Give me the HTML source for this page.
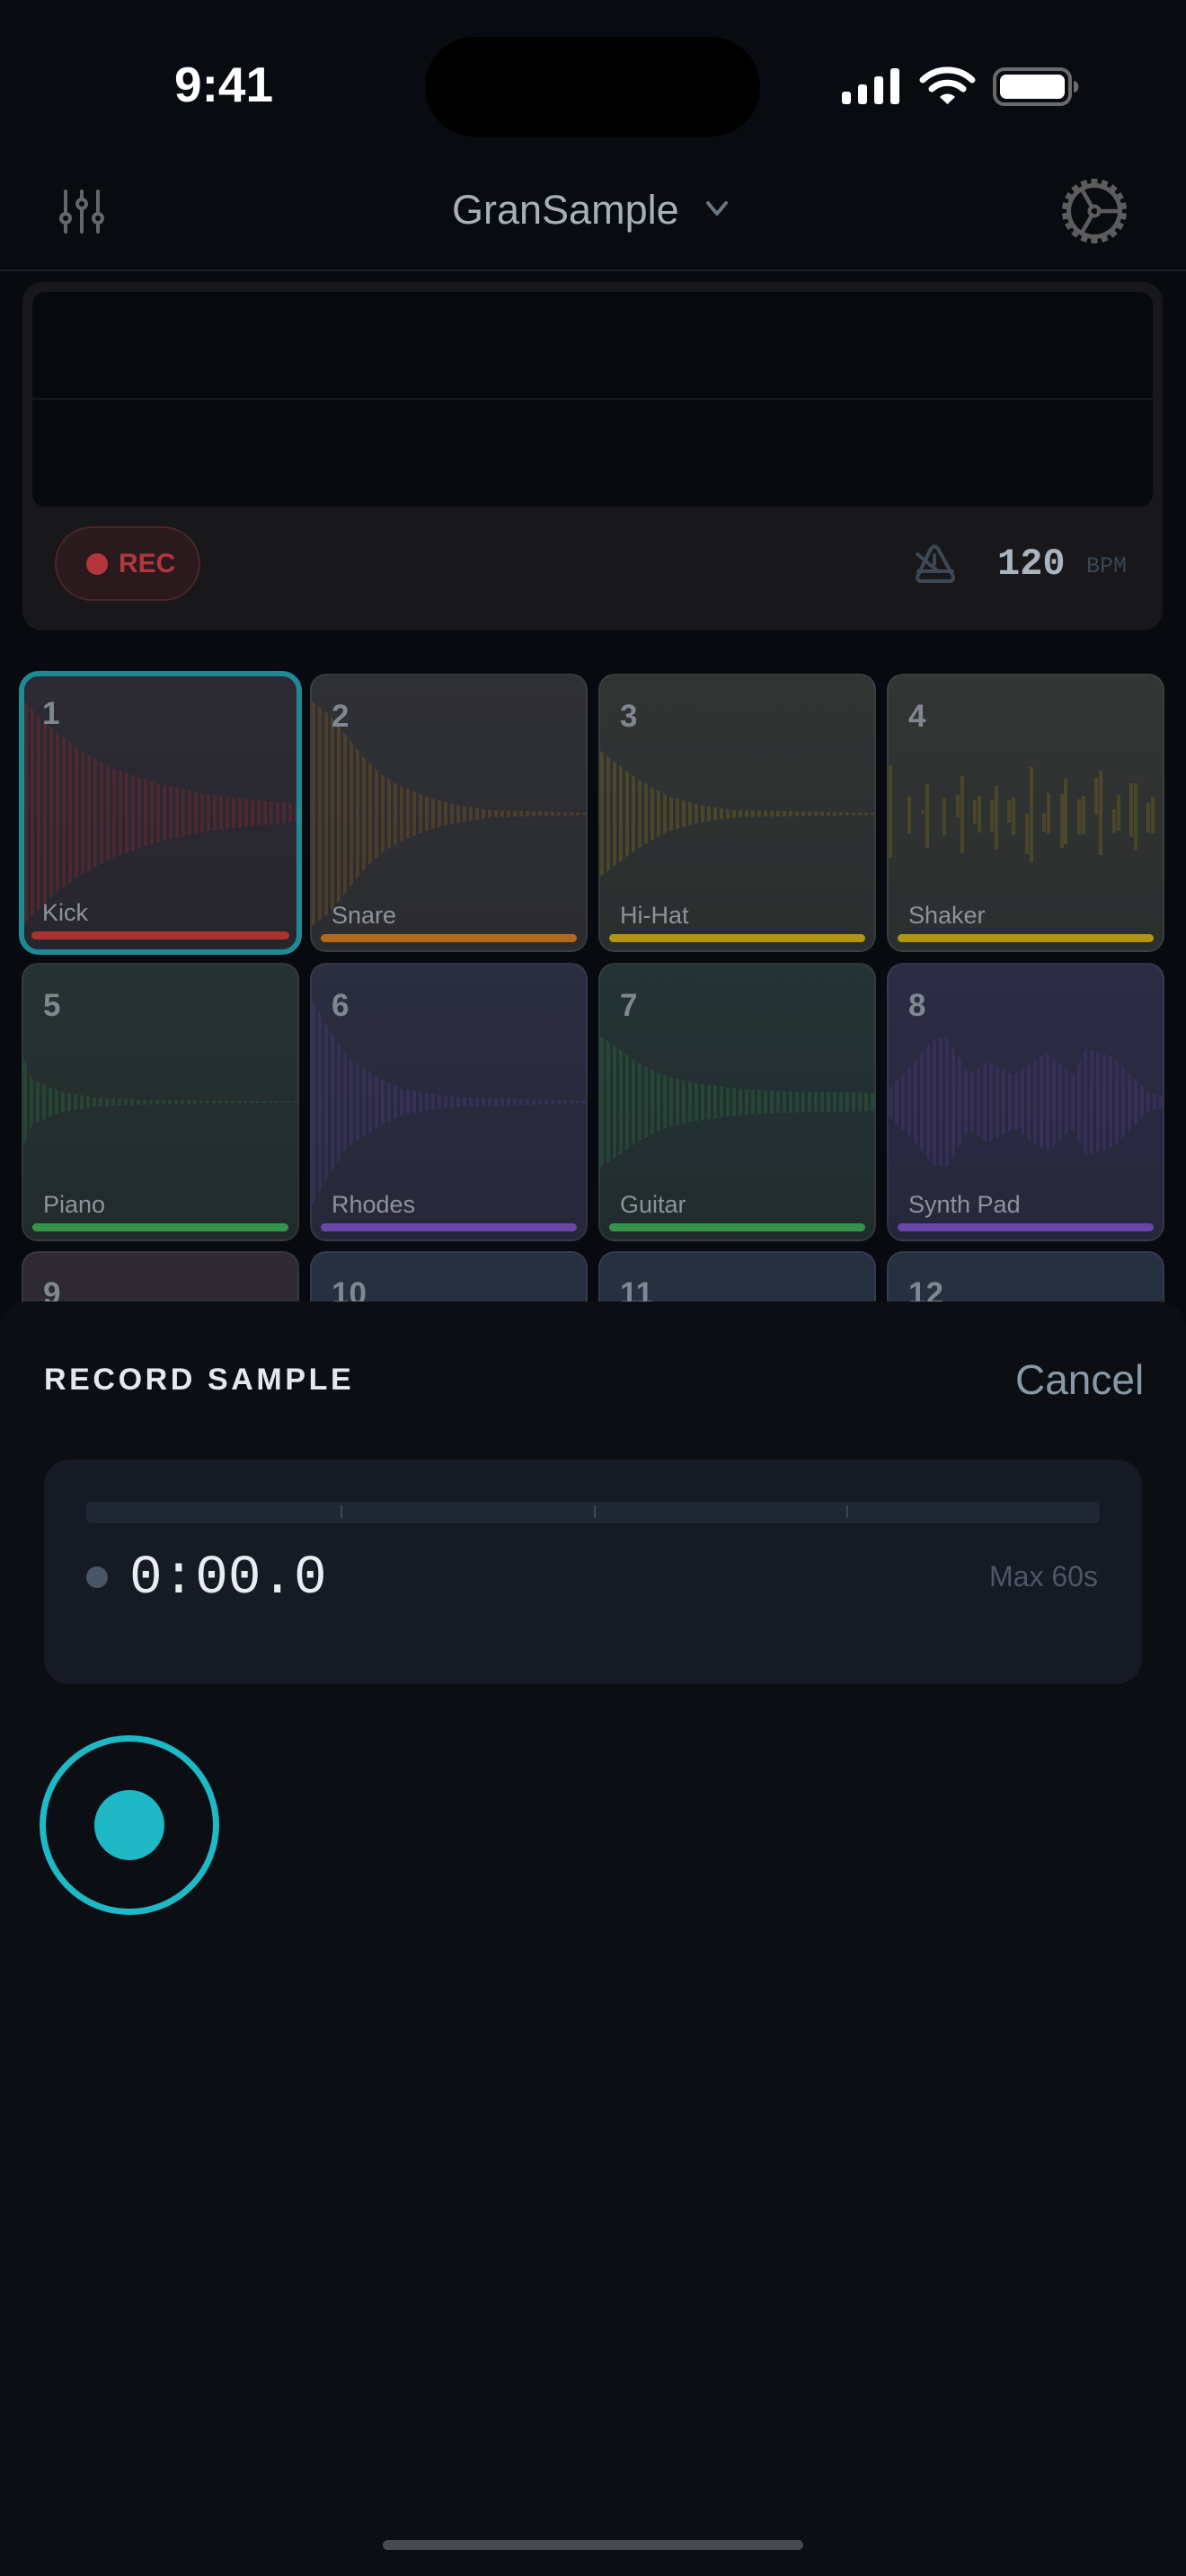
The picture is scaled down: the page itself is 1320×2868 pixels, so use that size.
<!DOCTYPE html>
<html><head><meta charset="utf-8">
<style>
*{margin:0;padding:0;box-sizing:border-box}
html,body{width:1320px;height:2868px;background:#070a0e;overflow:hidden;font-family:"Liberation Sans",sans-serif}
.abs{position:absolute}
.pad{position:absolute;width:309px;height:310px;border-radius:18px;border:2px solid rgba(255,255,255,0.06);overflow:hidden}
.pad svg{position:absolute;left:0;top:0}
.num{position:absolute;left:22px;top:26px;font-size:35px;font-weight:bold;color:#7f8790}
.lbl{position:absolute;left:22px;top:252px;font-size:27px;color:#8c939b}
.bar{position:absolute;left:10px;right:10px;top:288px;height:9px;border-radius:5px}
</style></head><body>
<div class="abs" style="left:0;top:0;width:1320px;height:300px;background:#080b10"></div>
<div class="abs" style="left:194px;top:62px;font-size:55px;font-weight:bold;color:#fff">9:41</div>
<div class="abs" style="left:473px;top:41px;width:373px;height:111px;border-radius:56px;background:#000"></div>
<svg class="abs" style="left:930px;top:70px" width="280" height="54" viewBox="930 70 280 54">
 <rect x="937" y="102" width="10" height="14" rx="3" fill="#fff"/>
 <rect x="955" y="94" width="10" height="22" rx="3" fill="#fff"/>
 <rect x="973" y="85" width="10" height="31" rx="3" fill="#fff"/>
 <rect x="991" y="76" width="10" height="40" rx="3" fill="#fff"/>
 <path d="M1027 89 A40 40 0 0 1 1082 89" stroke="#fff" stroke-width="7" fill="none" stroke-linecap="round"/>
 <path d="M1037 99 A26 26 0 0 1 1072 99" stroke="#fff" stroke-width="7" fill="none" stroke-linecap="round"/>
 <path d="M1046 108 L1054.5 116 L1063 108 A12 12 0 0 0 1046 108Z" fill="#fff"/>
 <rect x="1107" y="77" width="84" height="39" rx="11" fill="none" stroke="#6a6a6a" stroke-width="4"/>
 <rect x="1113" y="83" width="72" height="27" rx="7" fill="#fff"/>
 <path d="M1195 90 a5 6 0 0 1 0 13z" fill="#6a6a6a"/>
</svg>
<svg class="abs" style="left:60px;top:205px" width="64" height="60" viewBox="60 205 64 60">
 <g stroke="#666" stroke-width="4" stroke-linecap="round" fill="none">
 <line x1="73" y1="213" x2="73" y2="238"/><line x1="73" y1="248" x2="73" y2="258"/>
 <line x1="91" y1="213" x2="91" y2="222"/><line x1="91" y1="232" x2="91" y2="258"/>
 <line x1="109" y1="213" x2="109" y2="238"/><line x1="109" y1="248" x2="109" y2="258"/>
 <circle cx="73" cy="243" r="5"/><circle cx="91" cy="227" r="5"/><circle cx="109" cy="243" r="5"/>
 </g></svg>
<div class="abs" style="left:503px;top:208px;font-size:45px;color:#a6b0ba">GranSample</div>
<svg class="abs" style="left:782px;top:220px" width="36" height="26"><path d="M6 6 L16 18 L26 6" stroke="#6b7682" stroke-width="4" fill="none" stroke-linecap="round" stroke-linejoin="round"/></svg>
<svg class="abs" style="left:1178px;top:195px" width="80" height="80" viewBox="-40 -40 80 80">
 <circle r="31" fill="#5c5c5c"/>
 <g fill="#5c5c5c">
 <rect x="-3.5" y="-36" width="7" height="8" transform="rotate(0)"/><rect x="-3.5" y="-36" width="7" height="8" transform="rotate(20)"/><rect x="-3.5" y="-36" width="7" height="8" transform="rotate(40)"/><rect x="-3.5" y="-36" width="7" height="8" transform="rotate(60)"/><rect x="-3.5" y="-36" width="7" height="8" transform="rotate(80)"/><rect x="-3.5" y="-36" width="7" height="8" transform="rotate(100)"/><rect x="-3.5" y="-36" width="7" height="8" transform="rotate(120)"/><rect x="-3.5" y="-36" width="7" height="8" transform="rotate(140)"/><rect x="-3.5" y="-36" width="7" height="8" transform="rotate(160)"/><rect x="-3.5" y="-36" width="7" height="8" transform="rotate(180)"/><rect x="-3.5" y="-36" width="7" height="8" transform="rotate(200)"/><rect x="-3.5" y="-36" width="7" height="8" transform="rotate(220)"/><rect x="-3.5" y="-36" width="7" height="8" transform="rotate(240)"/><rect x="-3.5" y="-36" width="7" height="8" transform="rotate(260)"/><rect x="-3.5" y="-36" width="7" height="8" transform="rotate(280)"/><rect x="-3.5" y="-36" width="7" height="8" transform="rotate(300)"/><rect x="-3.5" y="-36" width="7" height="8" transform="rotate(320)"/><rect x="-3.5" y="-36" width="7" height="8" transform="rotate(340)"/>
 </g>
 <circle r="26" fill="#080b10"/>
 <g stroke="#5c5c5c" stroke-width="4.5" stroke-linecap="round">
 <line x1="5" y1="0" x2="26" y2="0"/><line x1="-2.5" y1="4.3" x2="-13" y2="22.5"/><line x1="-2.5" y1="-4.3" x2="-13" y2="-22.5"/>
 </g>
 <circle r="5.5" fill="none" stroke="#5c5c5c" stroke-width="4"/>
</svg>
<div class="abs" style="left:0;top:300px;width:1320px;height:2px;background:#1a1f25"></div>
<div class="abs" style="left:25px;top:314px;width:1269px;height:388px;border-radius:22px;background:#18181b"></div>
<div class="abs" style="left:36px;top:325px;width:1247px;height:239px;border-radius:14px;background:#070a0c"></div>
<div class="abs" style="left:36px;top:443px;width:1247px;height:2px;background:#14181b"></div>
<div class="abs" style="left:61px;top:586px;width:162px;height:83px;border-radius:42px;background:#2a1a1d;border:2px solid #4a2529"></div>
<div class="abs" style="left:96px;top:616px;width:24px;height:24px;border-radius:50%;background:#b5353c"></div>
<div class="abs" style="left:132px;top:611px;font-size:30px;font-weight:bold;color:#b2363d">REC</div>
<svg class="abs" style="left:1016px;top:605px" width="50" height="48" viewBox="1016 605 50 48">
 <g stroke="#3c4855" stroke-width="4" fill="none" stroke-linejoin="round" stroke-linecap="round">
 <path d="M1036 611 Q1040 606 1044 611 L1060 640 Q1063 647 1056 647 L1026 647 Q1019 647 1022 640 Z"/>
 <line x1="1022" y1="636" x2="1060" y2="636"/>
 <line x1="1021" y1="617" x2="1044" y2="636"/>
 <line x1="1040" y1="618" x2="1040" y2="628"/>
 </g></svg>
<div class="abs" style="left:1110px;top:604px;font-family:'Liberation Mono',monospace;font-size:42px;font-weight:bold;color:#a9b4bf">120</div>
<div class="abs" style="left:1209px;top:616px;font-family:'Liberation Mono',monospace;font-size:25px;color:#3b4754">BPM</div>

<svg width="0" height="0" style="position:absolute">
<defs>
<pattern id="pr" width="7" height="10" patternUnits="userSpaceOnUse"><rect width="4" height="10" fill="rgba(150,45,50,0.32)"/></pattern>
<pattern id="po" width="7" height="10" patternUnits="userSpaceOnUse"><rect width="4" height="10" fill="rgba(150,95,30,0.3)"/></pattern>
<pattern id="py" width="7" height="10" patternUnits="userSpaceOnUse"><rect width="4" height="10" fill="rgba(140,120,25,0.3)"/></pattern>
<pattern id="pg" width="7" height="10" patternUnits="userSpaceOnUse"><rect width="4" height="10" fill="rgba(45,120,65,0.3)"/></pattern>
<pattern id="pp" width="7" height="10" patternUnits="userSpaceOnUse"><rect width="4" height="10" fill="rgba(85,60,140,0.32)"/></pattern>
</defs></svg>

<div class="pad" style="left:21px;top:747px;width:315px;height:316px;border:6px solid #1e8a96;border-radius:22px;background:linear-gradient(#2c2a33,#27252d)">
 <svg width="303" height="304"><polygon fill="url(#pr)" points="0,28 30,58 60,81 100,103 150,120 200,131 250,137 303,142 303,162 250,167 200,173 150,184 100,201 60,223 30,246 0,276"/></svg>
 <div class="num" style="left:20px;top:22px">1</div><div class="lbl" style="left:20px;top:248px">Kick</div>
 <div class="bar" style="left:8px;right:8px;top:284px;background:#a8332f"></div></div>
<div class="pad" style="left:345px;top:750px;background:linear-gradient(#303134,#2b2c2f)">
 <svg width="309" height="310"><polygon fill="url(#po)" points="0,29 20,44 40,69 60,94 80,112 100,124 130,136 160,144 200,150 309,153 309,155 200,158 160,164 130,172 100,184 80,196 60,214 40,239 20,264 0,279"/></svg>
 <div class="num">2</div><div class="lbl">Snare</div><div class="bar" style="background:#b06a1a"></div></div>
<div class="pad" style="left:666px;top:750px;background:linear-gradient(#303433,#2b2e2e)">
 <svg width="309" height="310"><polygon fill="url(#py)" points="0,84 20,99 40,114 60,126 80,136 110,144 150,150 309,153 309,155 150,158 110,164 80,172 60,182 40,194 20,209 0,224"/></svg>
 <div class="num">3</div><div class="lbl">Hi-Hat</div><div class="bar" style="background:#b39512"></div></div>
<div class="pad" style="left:987px;top:750px;background:linear-gradient(#323533,#2c2f2f)">
 <svg width="309" height="310"><g fill="rgba(140,120,25,0.3)">
 <rect x="0" y="100" width="4" height="103"/><rect x="21" y="135" width="4" height="41"/><rect x="36" y="150" width="4" height="4"/><rect x="41" y="121" width="4" height="71"/><rect x="60" y="137" width="4" height="41"/><rect x="75" y="133" width="4" height="25"/><rect x="80" y="112" width="4" height="86"/><rect x="94" y="139" width="4" height="26"/><rect x="99" y="134" width="4" height="41"/><rect x="113" y="138" width="4" height="36"/><rect x="118" y="123" width="4" height="71"/><rect x="132" y="139" width="4" height="25"/><rect x="137" y="136" width="4" height="42"/><rect x="152" y="154" width="4" height="45"/><rect x="157" y="102" width="4" height="106"/><rect x="171" y="153" width="4" height="21"/><rect x="176" y="131" width="4" height="45"/><rect x="191" y="132" width="4" height="60"/><rect x="195" y="115" width="4" height="73"/><rect x="210" y="138" width="4" height="39"/><rect x="215" y="134" width="4" height="43"/><rect x="229" y="114" width="4" height="41"/><rect x="234" y="106" width="4" height="94"/><rect x="249" y="149" width="4" height="26"/><rect x="254" y="133" width="4" height="40"/><rect x="268" y="120" width="4" height="60"/><rect x="273" y="120" width="4" height="75"/><rect x="287" y="142" width="4" height="33"/><rect x="292" y="135" width="4" height="41"/></g></svg>
 <div class="num">4</div><div class="lbl">Shaker</div><div class="bar" style="background:#b39512"></div></div>
<div class="pad" style="left:24px;top:1072px;background:linear-gradient(#263231,#222b2b)">
 <svg width="309" height="310"><polygon fill="url(#pg)" points="0,103 10,128 40,141 80,148 150,151 309,152.5 309,153.5 150,155 80,158 40,165 10,178 0,203"/></svg>
 <div class="num">5</div><div class="lbl">Piano</div><div class="bar" style="background:#36934a"></div></div>
<div class="pad" style="left:345px;top:1072px;background:linear-gradient(#2b2d40,#262839)">
 <svg width="309" height="310"><polygon fill="url(#pp)" points="0,38 20,73 40,103 70,123 100,138 150,147 309,152 309,154 150,159 100,168 70,183 40,203 20,233 0,268"/></svg>
 <div class="num">6</div><div class="lbl">Rhodes</div><div class="bar" style="background:#6a46a6"></div></div>
<div class="pad" style="left:666px;top:1072px;background:linear-gradient(#253334,#212c2d)">
 <svg width="309" height="310"><polygon fill="url(#pg)" points="0,80 20,93 40,108 70,123 100,131 150,138 200,141 309,143 309,163 200,165 150,168 100,175 70,183 40,198 20,213 0,226"/></svg>
 <div class="num">7</div><div class="lbl">Guitar</div><div class="bar" style="background:#36934a"></div></div>
<div class="pad" style="left:987px;top:1072px;background:linear-gradient(#2c2c44,#26273b)">
 <svg width="309" height="310"><polygon fill="url(#pp)" points="0,138 25,113 50,83 65,81 90,123 110,108 140,123 175,98 205,123 220,93 250,103 270,123 290,143 309,148 309,158 290,163 270,183 250,203 220,213 205,183 175,208 140,183 110,198 90,183 65,225 50,223 25,193 0,168"/></svg>
 <div class="num">8</div><div class="lbl">Synth Pad</div><div class="bar" style="background:#6a46a6"></div></div>
<div class="pad" style="left:24px;top:1393px;background:#2e2a33"><div class="num">9</div></div>
<div class="pad" style="left:345px;top:1393px;background:#263041"><div class="num">10</div></div>
<div class="pad" style="left:666px;top:1393px;background:#263041"><div class="num">11</div></div>
<div class="pad" style="left:987px;top:1393px;background:#263041"><div class="num">12</div></div>

<div class="abs" style="left:0;top:1449px;width:1320px;height:1419px;background:#0b0f14;border-radius:30px 30px 0 0"></div>
<div class="abs" style="left:49px;top:1517px;font-size:34px;font-weight:bold;letter-spacing:3.6px;color:#e4e9ee">RECORD SAMPLE</div>
<div class="abs" style="left:1130px;top:1509px;font-size:46px;color:#8898a6">Cancel</div>
<div class="abs" style="left:49px;top:1625px;width:1222px;height:250px;border-radius:28px;background:#151a24"></div>
<div class="abs" style="left:96px;top:1672px;width:1128px;height:24px;border-radius:6px;background:#1f2634"></div>
<div class="abs" style="left:379px;top:1676px;width:2px;height:14px;background:#3a4453"></div>
<div class="abs" style="left:661px;top:1676px;width:2px;height:14px;background:#3a4453"></div>
<div class="abs" style="left:942px;top:1676px;width:2px;height:14px;background:#3a4453"></div>
<div class="abs" style="left:96px;top:1744px;width:24px;height:24px;border-radius:50%;background:#4a5564"></div>
<div class="abs" style="left:144px;top:1723px;font-family:'Liberation Mono',monospace;font-size:61px;color:#e8edf2">0:00.0</div>
<div class="abs" style="left:1101px;top:1737px;font-size:32px;color:#4d5866">Max 60s</div>
<div class="abs" style="left:44px;top:1932px;width:200px;height:200px;border-radius:50%;border:7px solid #1fb8c6"></div>
<div class="abs" style="left:105px;top:1993px;width:78px;height:78px;border-radius:50%;background:#1fb8c6"></div>
<div class="abs" style="left:426px;top:2828px;width:468px;height:11px;border-radius:6px;background:#46494e"></div>
</body></html>
